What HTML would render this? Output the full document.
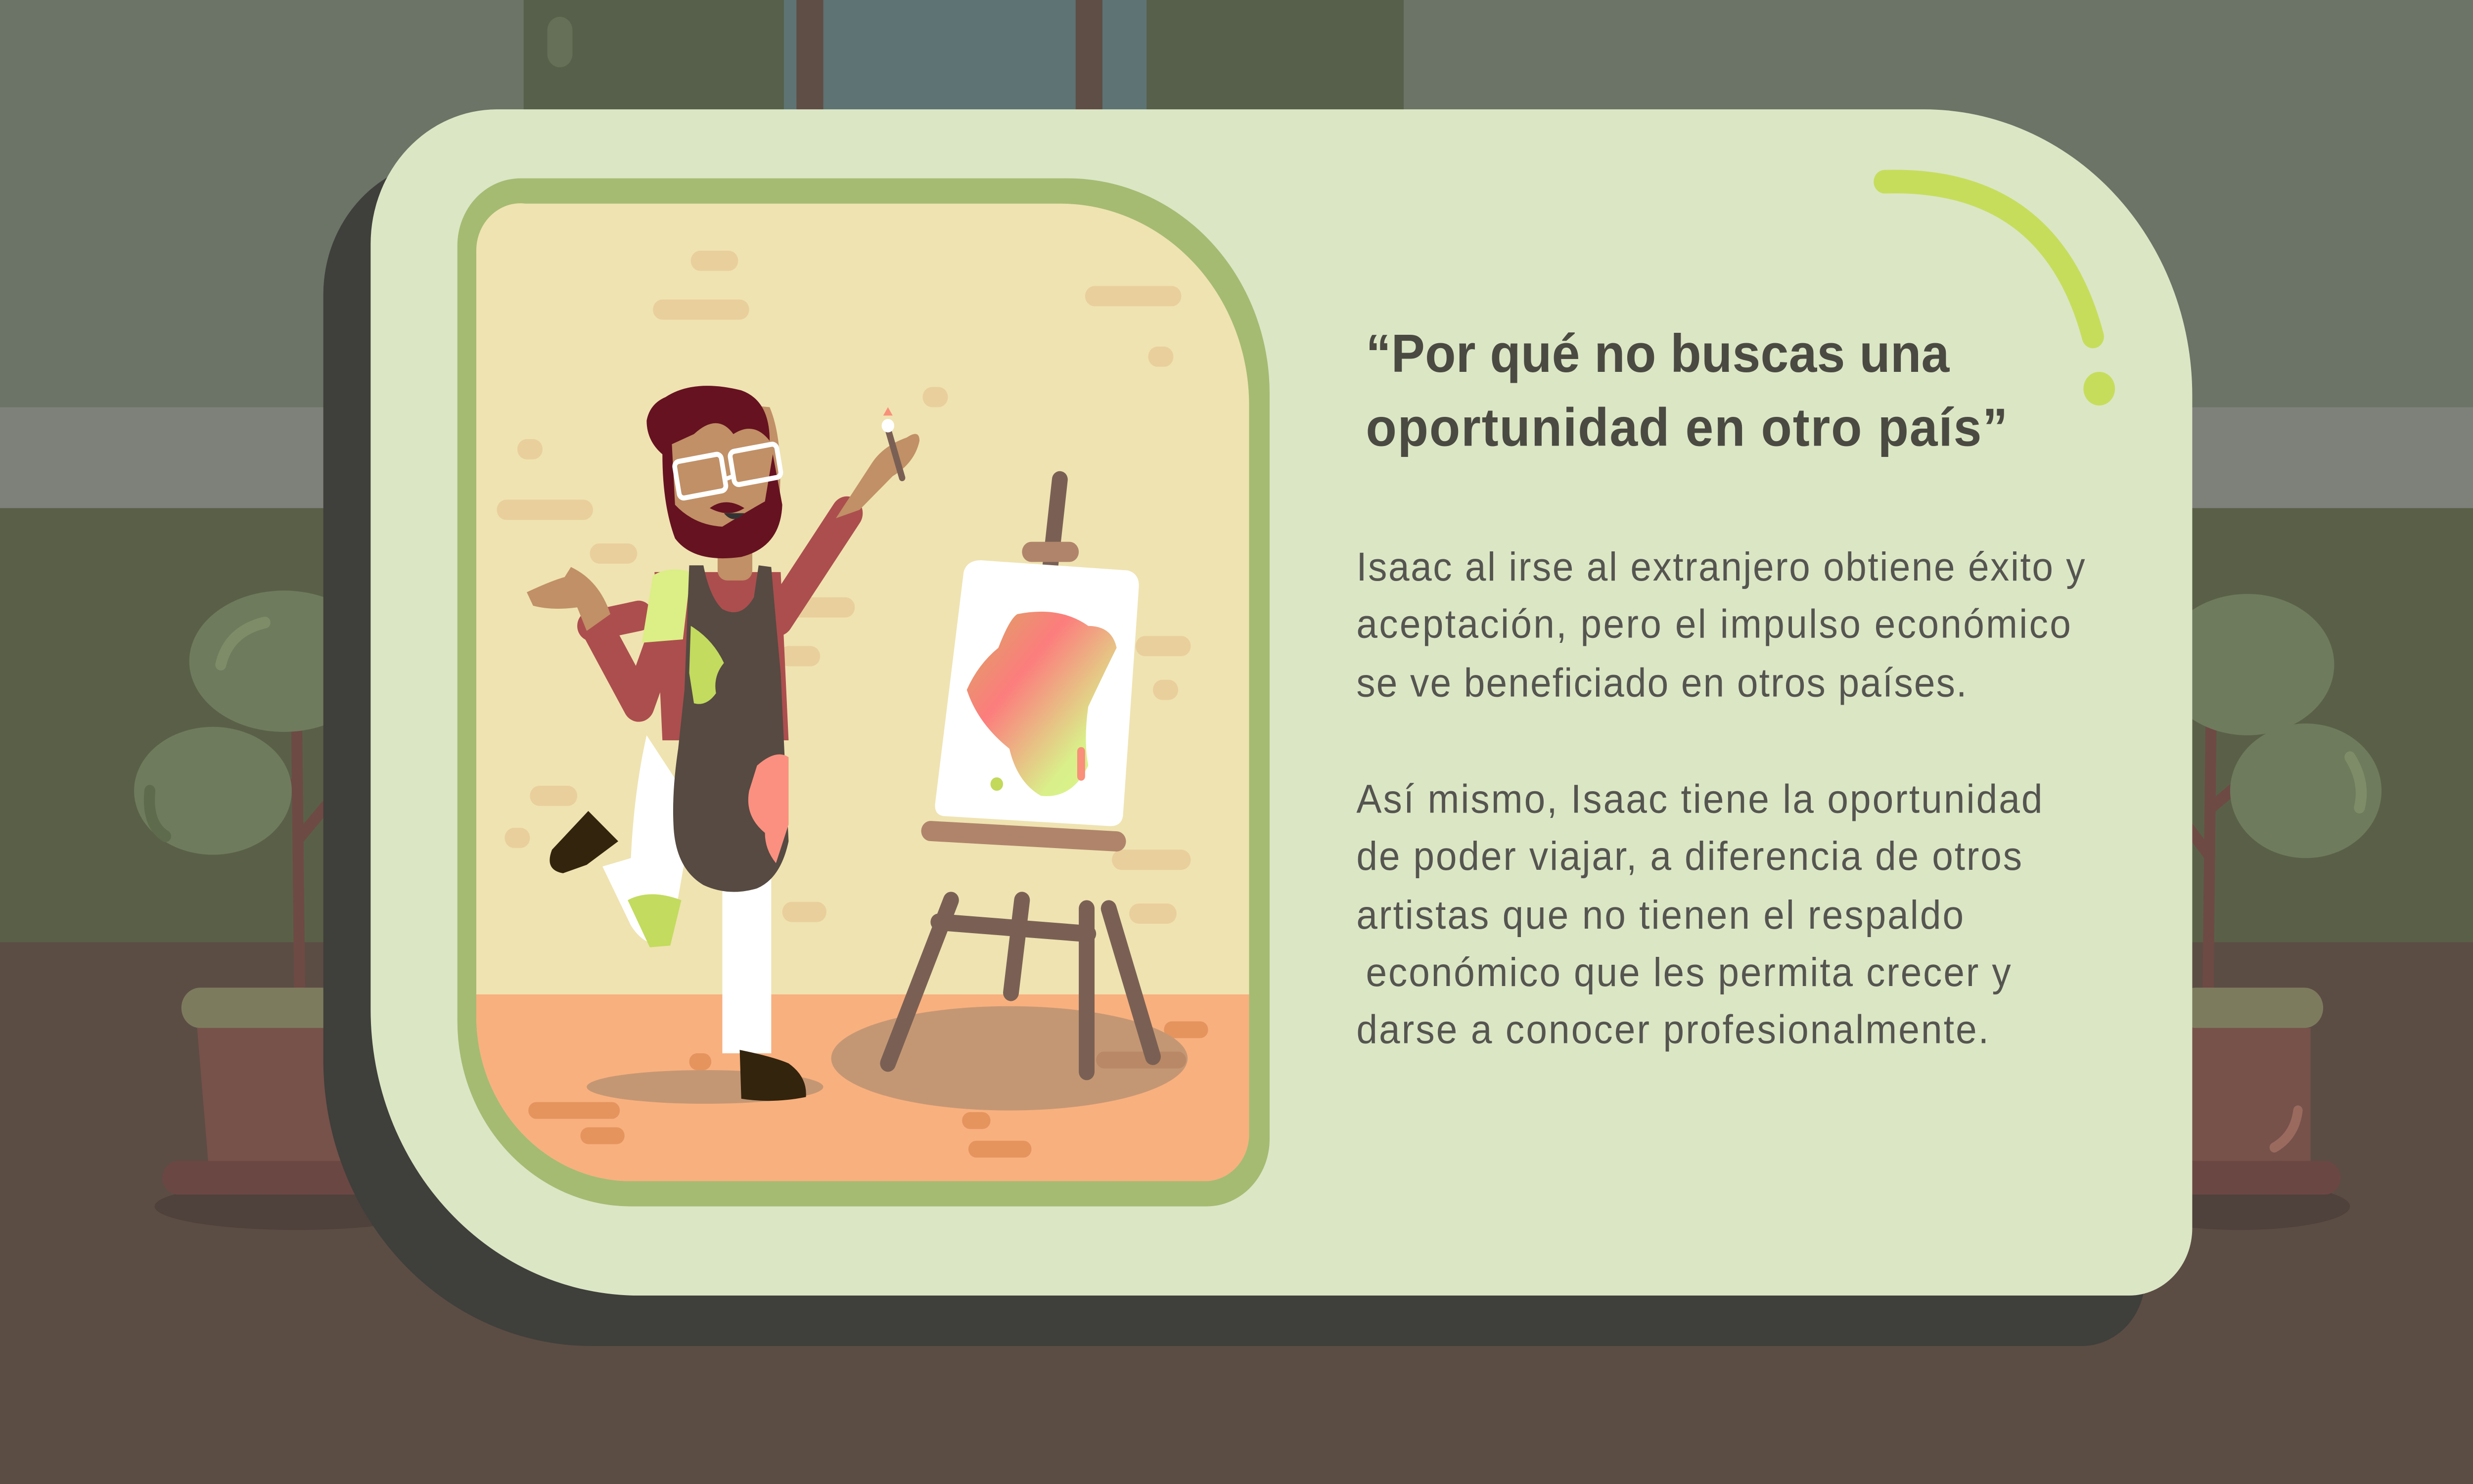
<!DOCTYPE html>
<html><head><meta charset="utf-8"><style>
html,body{margin:0;padding:0;background:#5c4d44;overflow:hidden;width:100%;height:100%}
svg{display:block;position:fixed;left:0;top:0;width:100vw;height:100vh}
</style></head><body>
<svg viewBox="0 0 1568 882" preserveAspectRatio="none" xmlns="http://www.w3.org/2000/svg">
<defs>
<linearGradient id="pg" x1="0" y1="0" x2="1" y2="1">
<stop offset="0" stop-color="#d8a860"/><stop offset="0.35" stop-color="#fc7d7d"/><stop offset="0.75" stop-color="#d9f08a"/><stop offset="1" stop-color="#dbf58a"/>
</linearGradient>
<clipPath id="inner"><path d="M333,121 H672 A120,120 0 0 1 792,241 V674 A28,28 0 0 1 764,702 H400 A98,98 0 0 1 302,604 V149 A28,28 0 0 1 333,121Z"/></clipPath>
</defs>
<rect x="0" y="0" width="1568" height="242" fill="#6b7466"/>
<rect x="0" y="242" width="1568" height="60" fill="#7e817a"/>
<rect x="0" y="302" width="1568" height="260" fill="#5a6048"/>
<rect x="0" y="560" width="1568" height="322" fill="#5c4d44"/>
<rect x="332" y="0" width="558" height="70" fill="#56604a"/>
<rect x="347" y="10" width="16" height="30" rx="8" fill="#667058"/>
<rect x="497" y="0" width="230" height="70" fill="#5e7373"/>
<rect x="505" y="0" width="17" height="70" fill="#5f4e46"/>
<rect x="682" y="0" width="17" height="70" fill="#5f4e46"/>
<g>
<path d="M190,590 L188,420 M188,470 L150,440 M188,500 L228,455" stroke="#6e4a44" stroke-width="7" fill="none"/>
<ellipse cx="180" cy="393" rx="60" ry="42" fill="#6e7b5c"/>
<ellipse cx="135" cy="470" rx="50" ry="38" fill="#6e7b5c"/>
<path d="M140,395 Q145,375 168,370" stroke="#7e8c68" stroke-width="7" fill="none" stroke-linecap="round"/>
<path d="M95,470 Q93,490 105,497" stroke="#5e6b4c" stroke-width="7" fill="none" stroke-linecap="round"/>
<ellipse cx="188" cy="717" rx="90" ry="14" fill="#4f413b"/>
<rect x="115" y="587" width="140" height="24" rx="12" fill="#7d7b5e"/>
<path d="M125,611 H250 V690 H132Z" fill="#77524a"/>
<rect x="103" y="690" width="170" height="20" rx="10" fill="#6b4743"/>
</g>
<g>
<path d="M1400,590 L1402,420 M1402,480 L1440,450 M1402,510 L1370,470" stroke="#6e4a44" stroke-width="7" fill="none"/>
<ellipse cx="1425" cy="395" rx="55" ry="42" fill="#6e7b5c"/>
<ellipse cx="1462" cy="470" rx="48" ry="40" fill="#6e7b5c"/>
<path d="M1490,450 Q1500,465 1496,480" stroke="#7e8c68" stroke-width="7" fill="none" stroke-linecap="round"/>
<ellipse cx="1420" cy="717" rx="70" ry="14" fill="#4f413b"/>
<rect x="1380" y="587" width="93" height="24" rx="12" fill="#7d7b5e"/>
<path d="M1380,611 H1465 V690 H1380Z" fill="#77524a"/>
<path d="M1442,682 Q1455,675 1457,660" stroke="#9a6a5f" stroke-width="6" fill="none" stroke-linecap="round"/>
<rect x="1380" y="690" width="104" height="20" rx="10" fill="#6b4743"/>
</g>
<path transform="translate(-30,30)" d="M315,65 H1220 A170,170 0 0 1 1390,235 V730 A40,40 0 0 1 1350,770 H405 A170,170 0 0 1 235,600 V145 A80,80 0 0 1 315,65 Z" fill="#3f3f3b"/>
<path d="M315,65 H1220 A170,170 0 0 1 1390,235 V730 A40,40 0 0 1 1350,770 H405 A170,170 0 0 1 235,600 V145 A80,80 0 0 1 315,65 Z" fill="#dbe6c5"/>
<path d="M1195,108 Q1300,105 1327,200" stroke="#c6dd5b" stroke-width="14" fill="none" stroke-linecap="round"/>
<circle cx="1331" cy="231" r="10" fill="#c6dd5b"/>
<path d="M330,106 H677 A128,128 0 0 1 805,234 V677 A40,40 0 0 1 765,717 H400 A110,110 0 0 1 290,607 V146 A40,40 0 0 1 330,106Z" fill="#a5bb72"/>
<g clip-path="url(#inner)">
<rect x="290" y="106" width="520" height="620" fill="#efe3b1"/>
<rect x="290" y="591" width="520" height="130" fill="#f8b07e"/>
<g fill="#e9cf9c">
<rect x="438" y="149" width="30" height="12" rx="6"/><rect x="414" y="178" width="61" height="12" rx="6"/>
<rect x="688" y="170" width="61" height="12" rx="6"/><rect x="728" y="206" width="16" height="12" rx="6"/>
<rect x="585" y="230" width="16" height="12" rx="6"/><rect x="328" y="261" width="16" height="12" rx="6"/>
<rect x="315" y="297" width="61" height="12" rx="6"/><rect x="374" y="323" width="30" height="12" rx="6"/>
<rect x="494" y="355" width="48" height="12" rx="6"/><rect x="494" y="384" width="26" height="12" rx="6"/>
<rect x="720" y="378" width="35" height="12" rx="6"/><rect x="731" y="404" width="16" height="12" rx="6"/>
<rect x="336" y="467" width="30" height="12" rx="6"/><rect x="320" y="492" width="16" height="12" rx="6"/>
<rect x="496" y="536" width="28" height="12" rx="6"/><rect x="705" y="505" width="50" height="12" rx="6"/>
<rect x="716" y="537" width="30" height="12" rx="6"/>
</g>
<g fill="#e5945e">
<rect x="335" y="655" width="58" height="10" rx="5"/><rect x="368" y="670" width="28" height="10" rx="5"/>
<rect x="437" y="626" width="14" height="10" rx="5"/><rect x="610" y="661" width="18" height="10" rx="5"/>
<rect x="614" y="678" width="40" height="10" rx="5"/><rect x="738" y="607" width="28" height="10" rx="5"/>
</g>
<ellipse cx="640" cy="629" rx="113" ry="31" fill="#c49774"/>
<ellipse cx="447" cy="646" rx="75" ry="10" fill="#c49774"/>
<rect x="695" y="625" width="57" height="10" rx="5" fill="#b98866"/>
<g stroke="#7a6054" stroke-width="10" stroke-linecap="round" fill="none">
<path d="M672,285 L666,336"/>
<path d="M603,535 L563,632"/>
<path d="M648,535 L641,590"/>
<path d="M689,540 L689,637"/>
<path d="M703,540 L731,628"/>
<path d="M595,548 L690,555"/>
</g>
<rect x="648" y="322" width="36" height="12" rx="6" fill="#b0846b"/>
<path d="M622,333 L715,339 Q723,341 722,350 L712,485 Q711,491 704,491 L598,485 Q592,484 593,477 L611,340 Q613,333 622,333Z" fill="#ffffff"/>
<path d="M645,365 Q672,360 690,372 Q705,372 708,385 Q700,400 690,420 Q687,440 690,455 Q680,475 660,473 Q645,465 640,445 Q620,430 613,410 Q620,395 633,385 Q640,368 645,365Z" fill="url(#pg)"/>
<circle cx="632" cy="466" r="4" fill="#c2d95c"/>
<rect x="683" y="444" width="5" height="20" rx="2.5" fill="#f9907a"/>
<rect x="584" y="491" width="130" height="12" rx="6" transform="rotate(3 649 497)" fill="#b0846b"/>
<path d="M410,437 Q402,470 400,510 L382,515 L400,550 Q410,565 425,560 L440,480Z" fill="#ffffff"/>
<path d="M398,535 Q412,528 432,535 L425,562 L412,563Z" fill="#c3db5e"/>
<path d="M373,482 L350,505 Q345,517 357,519 L372,514 L392,500Z" fill="#33240e"/>
<path d="M458,500 L458,626 L489,626 L489,500Z" fill="#ffffff"/>
<path d="M469,624 Q490,628 500,632 Q512,640 511,652 Q490,656 470,653Z" fill="#33240e"/>
<path d="M405,366 L375,372" stroke="#ac4e4e" stroke-width="18" stroke-linecap="round"/>
<path d="M429,356 L405,419 L378,372" stroke="#ac4e4e" stroke-width="20" fill="none" stroke-linejoin="round" stroke-linecap="round"/>
<path d="M334,352 Q350,345 358,343 L362,337 Q380,345 387,365 L372,375 L366,361 Q350,363 338,360Z" fill="#c19066"/>
<path d="M493,368 L537,305" stroke="#ac4e4e" stroke-width="20" stroke-linecap="round"/>
<path d="M415,340 L495,340 L500,440 L420,440Z" fill="#ac4e4e"/>
<path d="M414,342 Q425,336 438,340 L433,380 L407,382Z" fill="#dcee86"/>
<path d="M530,308 L553,275 Q560,265 575,260 Q583,255 583,262 Q580,275 566,283 L545,303Z" fill="#c19066"/>
<path d="M563,255 L572,284" stroke="#7a6054" stroke-width="4" stroke-linecap="round"/>
<circle cx="563" cy="253" r="4" fill="#fff"/>
<path d="M560,247 L563,242 L566,247Z" fill="#f9907a"/>
<rect x="455" y="323" width="22" height="22" rx="6" fill="#c19066"/>
<path d="M437,336 L446,336 Q450,355 458,362 Q470,368 478,355 L481,336 L489,337 Q492,370 495,400 L500,500 Q495,522 480,528 Q462,533 446,526 Q428,516 427,490 Q426,470 430,445 L434,410Z" fill="#564a42"/>
<path d="M438,372 Q452,380 459,394 Q452,402 454,412 Q448,420 440,418 L437,400Z" fill="#c3db5e"/>
<path d="M480,455 Q492,445 500,450 L500,490 L492,513 Q485,505 485,495 Q472,485 475,470Z" fill="#fb9080"/>
<path d="M425,255 Q428,240 445,238 L488,242 Q497,262 494,300 Q488,322 462,326 Q432,324 427,300Z" fill="#c19066"/>
<path d="M410,250 Q412,240 422,236 Q440,225 470,232 Q488,238 488,262 Q478,250 465,258 Q455,245 440,258 L426,264 L428,300 Q440,312 458,313 Q470,306 485,298 L490,270 L496,300 Q495,325 470,331 Q440,335 428,320 Q420,300 420,270 Q410,262 410,250Z" fill="#661221"/>
<rect x="429" y="272" width="30" height="22" rx="3" stroke="#fff" stroke-width="3" fill="none" transform="rotate(-10 444 283)"/>
<rect x="464" y="266" width="30" height="20" rx="3" stroke="#fff" stroke-width="3" fill="none" transform="rotate(-10 479 276)"/>
<path d="M459,285 L465,283" stroke="#fff" stroke-width="2.5"/>
<path d="M450,302 Q460,295 472,302 Q462,308 450,302Z" fill="#661221"/>
<path d="M459,305 Q465,312 472,305Z" fill="#333"/>
</g>
<g font-family="'Liberation Sans', sans-serif">
<text x="866" y="221" font-size="32" font-weight="bold" fill="#4a4a42" textLength="370">“Por qué no buscas una</text>
<text x="866" y="265" font-size="32" font-weight="bold" fill="#4a4a42" textLength="407">oportunidad en otro país”</text>
<g font-size="24" fill="#555550">
<text x="860" y="345" textLength="462">Isaac al irse al extranjero obtiene éxito y</text>
<text x="860" y="379" textLength="453">aceptación, pero el impulso económico</text>
<text x="860" y="414" textLength="387">se ve beneficiado en otros países.</text>
<text x="860" y="483" textLength="435">Así mismo, Isaac tiene la oportunidad</text>
<text x="860" y="517" textLength="422">de poder viajar, a diferencia de otros</text>
<text x="860" y="552" textLength="385">artistas que no tienen el respaldo</text>
<text x="866" y="586" textLength="409">económico que les permita crecer y</text>
<text x="860" y="620" textLength="401">darse a conocer profesionalmente.</text>
</g>
</g>
</svg>
</body></html>
